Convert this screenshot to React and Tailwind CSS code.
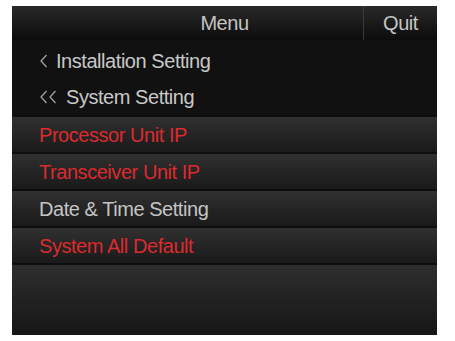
function Chevron({ double }) {
  return (
    <svg width={double ? 18 : 8} height="14" viewBox={double ? '0 0 18 14' : '0 0 8 14'} className="mr-[8px] text-[#a8a8a8]">
      <polyline points="6.5,1 1,7 6.5,13" fill="none" stroke="currentColor" strokeWidth="1.2" />
      {double && <polyline points="15.5,1 10,7 15.5,13" fill="none" stroke="currentColor" strokeWidth="1.2" />}
    </svg>
  );
}

function BarRow({ label, red }) {
  return (
    <div className="flex h-[37px] items-center border-t-2 border-[#0e0e0e] bg-gradient-to-b from-[#303030] to-[#1a1a1a] pl-[27px]">
      <span className={red ? 'text-[#dc2a2e]' : 'text-[#c4c4c4]'}>{label}</span>
    </div>
  );
}

export default function App() {
  return (
    <div className="h-[341px] w-[455px] bg-white pl-[12px] pt-[6px]" style={{ fontFamily: '"Liberation Sans", Arial, sans-serif' }}>
      <div className="flex h-[329px] w-[425px] flex-col bg-[#111] text-[20px] tracking-[-0.45px]">
        <div className="relative flex h-[34px] items-center bg-gradient-to-b from-[#2a2a2a] to-[#0c0c0c] text-[#c4c4c4]">
          <span className="absolute inset-0 flex items-center justify-center">Menu</span>
          <div className="ml-auto flex h-full w-[74px] items-center justify-center border-l border-[#3a3a3a]">Quit</div>
        </div>
        <div className="flex h-[38px] items-center pl-[28px] pt-[3px] text-[#c8c8c8]">
          <Chevron />
          <span>Installation Setting</span>
        </div>
        <div className="flex h-[37px] items-center pl-[28px] text-[#c8c8c8]">
          <Chevron double />
          <span>System Setting</span>
        </div>
        <BarRow label="Processor Unit IP" red />
        <BarRow label="Transceiver Unit IP" red />
        <BarRow label="Date & Time Setting" />
        <BarRow label="System All Default" red />
        <div className="flex-1 border-t-2 border-[#0e0e0e] bg-gradient-to-b from-[#2e2e2e] to-[#161616]" />
      </div>
    </div>
  );
}
